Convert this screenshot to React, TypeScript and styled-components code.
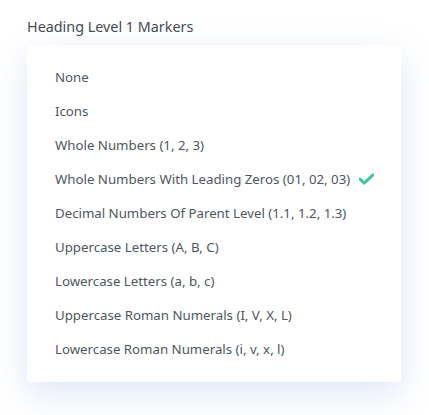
import React from "react";
import styled, { createGlobalStyle } from "styled-components";

const Global = createGlobalStyle`
  html, body { margin: 0; padding: 0; background: #ffffff; }
  body { font-family: "Noto Sans", "Open Sans", sans-serif; -webkit-font-smoothing: antialiased; }
`;

const Page = styled.div`
  padding: 17px 28px 40px 27px;
  width: 374px;
`;

const Title = styled.div`
  font-size: 14.35px;
  line-height: 20px;
  color: #454a52;
  margin-bottom: 8px;
`;

const Panel = styled.ul`
  list-style: none;
  margin: 0;
  padding: 15px 0 16px 0;
  background: #ffffff;
  border-radius: 3px;
  box-shadow: 0 12px 36px rgba(90, 130, 210, 0.2);
`;

const Item = styled.li`
  display: flex;
  align-items: center;
  gap: 9px;
  height: 34px;
  padding-left: 28px;
  font-size: 13.25px;
  color: #4e5662;
`;

const Check = styled.svg`
  width: 15px;
  height: 12px;
  flex: none;
`;

const items = [
  "None",
  "Icons",
  "Whole Numbers (1, 2, 3)",
  "Whole Numbers With Leading Zeros (01, 02, 03)",
  "Decimal Numbers Of Parent Level (1.1, 1.2, 1.3)",
  "Uppercase Letters (A, B, C)",
  "Lowercase Letters (a, b, c)",
  "Uppercase Roman Numerals (I, V, X, L)",
  "Lowercase Roman Numerals (i, v, x, l)",
];

export default function App() {
  return (
    <>
      <Global />
      <Page>
        <Title>Heading Level 1 Markers</Title>
        <Panel>
          {items.map((t, i) => (
            <Item key={t}>
              <span>{t}</span>
              {i === 3 && (
                <Check viewBox="0 0 15 12">
                  <path d="M1 6.2 L5.2 10.2 L14 1.8" fill="none" stroke="#3ec7a5" strokeWidth="3" strokeLinecap="round" strokeLinejoin="round" />
                </Check>
              )}
            </Item>
          ))}
        </Panel>
      </Page>
    </>
  );
}
